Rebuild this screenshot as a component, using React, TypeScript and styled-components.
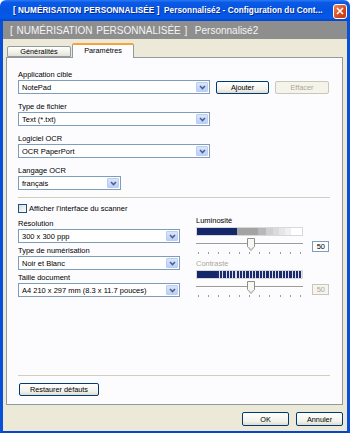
import React from "react";
import styled, { createGlobalStyle } from "styled-components";

const GlobalStyle = createGlobalStyle`
  html, body {
    margin: 0;
    padding: 0;
    background: #ffffff;
  }
  body {
    font-family: "Liberation Sans", Arial, sans-serif;
    font-size: 7.5px;
    color: #000000;
  }
`;

const Window = styled.div`
  width: 350px;
  height: 433px;
  display: flex;
  flex-direction: column;
  overflow: hidden;
`;

const TitleBar = styled.div`
  height: 21px;
  flex: none;
  display: flex;
  align-items: center;
  padding: 0 3px 0 13px;
  box-sizing: border-box;
  background: linear-gradient(
    #2a7af5 0%,
    #0a5ae6 12%,
    #0454e2 45%,
    #0558e8 85%,
    #0344c8 100%
  );
  border-radius: 6px 6px 0 0;
`;

const TitleText = styled.div`
  flex: 1;
  color: #ffffff;
  font-weight: bold;
  font-size: 8.2px;
  white-space: nowrap;
  text-shadow: 1px 1px 0 #0a2a8c;
  letter-spacing: 0.05px;
`;

const CloseButton = styled.div`
  width: 14px;
  height: 15px;
  box-sizing: border-box;
  border: 1px solid #ffffff;
  border-radius: 3px;
  background: linear-gradient(135deg, #f08a60, #d8461c 60%, #c23a12);
  display: flex;
  align-items: center;
  justify-content: center;
  margin-top: 1px;
`;

const Body = styled.div`
  flex: 1;
  display: flex;
  flex-direction: column;
  background: #ece9d8;
  border-left: 3px solid #0850d8;
  border-right: 3px solid #0850d8;
  border-bottom: 2px solid #0846c8;
`;

const Banner = styled.div`
  height: 18px;
  flex: none;
  background: #8e8e8e;
  color: #f4f4f4;
  font-size: 10px;
  display: flex;
  align-items: center;
  padding-left: 7px;
  white-space: nowrap;
  word-spacing: 1px;
`;

const TabStrip = styled.div`
  height: 14px;
  margin-top: 4px;
  flex: none;
  display: flex;
  align-items: flex-end;
  gap: 1px;
  padding-left: 4px;
`;

const Tab = styled.div<{ $active?: boolean }>`
  box-sizing: border-box;
  width: ${(p) => (p.$active ? 62 : 64)}px;
  height: ${(p) => (p.$active ? 15 : 11)}px;
  margin-bottom: ${(p) => (p.$active ? -1 : 0)}px;
  position: relative;
  z-index: ${(p) => (p.$active ? 1 : 0)};
  border: 1px solid #919b9c;
  border-bottom: ${(p) => (p.$active ? "none" : "1px solid #919b9c")};
  border-top: ${(p) => (p.$active ? "2px solid #f3a53a" : "1px solid #919b9c")};
  border-radius: 2px 2px 0 0;
  background: ${(p) =>
    p.$active ? "#fcfcfe" : "linear-gradient(#ffffff, #f0efe8 60%, #e4e2d8)"};
  display: flex;
  align-items: ${(p) => (p.$active ? "flex-start" : "center")};
  justify-content: center;
  padding-top: ${(p) => (p.$active ? 1 : 0)}px;
  font-size: 7.3px;
`;

const Panel = styled.div`
  flex: 1;
  margin: 0 4px 0 3px;
  box-sizing: border-box;
  background: #fcfcfe;
  border: 1px solid #919b9c;
  padding: 12px 12px 8px 11px;
  display: flex;
  flex-direction: column;
`;

const Fields = styled.div`
  display: flex;
  flex-direction: column;
  gap: 8px;
`;

const Field = styled.div`
  display: flex;
  flex-direction: column;
`;

const Label = styled.div<{ $disabled?: boolean }>`
  height: 10px;
  line-height: 10px;
  white-space: nowrap;
  color: ${(p) => (p.$disabled ? "#aca899" : "#000000")};
`;

const Combo = styled.div<{ $width: number }>`
  width: ${(p) => p.$width}px;
  height: 14px;
  box-sizing: border-box;
  border: 1px solid #7f9db9;
  background: #ffffff;
  display: flex;
  align-items: center;
  padding: 1px;
`;

const ComboText = styled.div`
  flex: 1;
  padding-left: 2px;
  white-space: nowrap;
  overflow: hidden;
`;

const ArrowBox = styled.div`
  width: 12px;
  height: 10px;
  box-sizing: border-box;
  border: 1px solid #b9cdf5;
  border-radius: 1px;
  background: linear-gradient(#d9e5fd, #bccff8);
  display: flex;
  align-items: center;
  justify-content: center;
`;

const AppRow = styled.div`
  display: flex;
  align-items: center;
  gap: 6px;
`;

const Button = styled.div<{ $width: number; $disabled?: boolean }>`
  width: ${(p) => p.$width}px;
  height: 13px;
  box-sizing: border-box;
  border: 1px solid ${(p) => (p.$disabled ? "#c9c7ba" : "#003c74")};
  border-radius: 2px;
  background: ${(p) =>
    p.$disabled ? "#f5f4ea" : "linear-gradient(#ffffff, #f2f1ea 70%, #dcdbd0)"};
  color: ${(p) => (p.$disabled ? "#aca899" : "#000000")};
  display: flex;
  align-items: center;
  justify-content: center;
  white-space: nowrap;
  font-size: 7.3px;
`;

const Separator = styled.div<{ $top: number }>`
  height: 1px;
  width: 312px;
  background: #d0d0bf;
  margin-top: ${(p) => p.$top}px;
`;

const BottomSeparator = styled(Separator)`
  margin-top: auto;
`;

const CheckRow = styled.div`
  display: flex;
  align-items: center;
  gap: 2px;
  margin-top: 5px;
  height: 10px;
`;

const CheckBox = styled.div`
  width: 9px;
  height: 9px;
  box-sizing: border-box;
  border: 1px solid #1c5180;
  background: linear-gradient(135deg, #dcdcd4, #ffffff);
`;

const Columns = styled.div`
  display: grid;
  grid-template-columns: 162px 135px;
  column-gap: 16px;
  margin-top: 3px;
`;

const LeftCol = styled.div`
  display: flex;
  flex-direction: column;
  gap: 3px;
  padding-top: 3px;
`;

const RightCol = styled.div`
  display: flex;
  flex-direction: column;
  width: 134px;
`;

const Bar = styled.div<{ $kind: "lum" | "con" }>`
  width: 107px;
  height: 9px;
  margin-top: 1px;
  box-sizing: border-box;
  border: 1px solid #d8d8d8;
  background: ${(p) =>
    p.$kind === "lum"
      ? "linear-gradient(90deg, #14276a 0 38%, #a3a3a3 38% 58%, #b8b8b8 58% 66%, #cfcfcf 66% 72%, #dadada 72% 78%, #e6e6e6 78% 84%, #f0f0f0 84% 90%, #ffffff 90% 100%)"
      : "linear-gradient(90deg, #14276a 0 19%, transparent 19%), repeating-linear-gradient(90deg, #1a2b70 0 2.2px, #dde0ec 2.2px 3.3px)"};
`;

const SliderRow = styled.div`
  display: flex;
  align-items: center;
  gap: 9px;
  height: 14px;
  margin-top: 2px;
`;

const Track = styled.div`
  position: relative;
  width: 107px;
  height: 14px;
`;

const Groove = styled.div`
  position: absolute;
  left: 0;
  right: 0;
  top: 5px;
  height: 2px;
  box-sizing: border-box;
  border-top: 1px solid #9d9c99;
  border-bottom: 1px solid #ffffff;
  background: #f0efe8;
`;

const Thumb = styled.svg`
  position: absolute;
  top: 0;
  width: 8px;
  height: 13px;
`;

const ValueBox = styled.div<{ $disabled?: boolean }>`
  width: 17px;
  height: 11px;
  box-sizing: border-box;
  border: 1px solid ${(p) => (p.$disabled ? "#c9c7ba" : "#7f9db9")};
  background: ${(p) => (p.$disabled ? "#f5f4ee" : "#ffffff")};
  color: ${(p) => (p.$disabled ? "#aca899" : "#000000")};
  display: flex;
  align-items: center;
  justify-content: flex-end;
  padding-right: 3px;
  margin-top: 3px;
`;

const Ticks = styled.div`
  width: 103px;
  margin-left: 2px;
  display: flex;
  justify-content: space-between;
  height: 2px;
`;

const Tick = styled.span`
  width: 1px;
  height: 2px;
  background: #9a9a96;
`;

const LabelGap = styled.div`
  height: 5px;
`;

const Footer = styled.div`
  height: 26px;
  flex: none;
  display: flex;
  justify-content: flex-end;
  align-items: flex-start;
  gap: 7px;
  padding: 7px 4px 0 0;
  box-sizing: border-box;
`;

const FooterButton = styled(Button)`
  height: 14px;
`;

const RestoreRow = styled.div`
  margin-top: 7px;
  padding-left: 1px;
`;

const Arrow = () => (
  <svg width="7" height="5" viewBox="0 0 7 5">
    <path d="M1 1 L3.5 3.5 L6 1" fill="none" stroke="#4d6185" strokeWidth="1.6" />
  </svg>
);

const Select: React.FC<{ value: string; width: number }> = ({ value, width }) => (
  <Combo $width={width}>
    <ComboText>{value}</ComboText>
    <ArrowBox>
      <Arrow />
    </ArrowBox>
  </Combo>
);

const Slider: React.FC<{ value: number; disabled?: boolean }> = ({ value, disabled }) => (
  <>
    <SliderRow>
      <Track>
        <Groove />
        <Thumb viewBox="0 0 8 13" style={{ left: `calc(${value}% - 3px)` }}>
          <path
            d="M0.5 0.5 H7.5 V8.5 L4 12.5 L0.5 8.5 Z"
            fill="#f7f7f4"
            stroke="#8f8f8a"
          />
          <path d="M1.5 9 L4 11.5 L6.5 9" fill="none" stroke="#c8c8c0" />
        </Thumb>
      </Track>
      <ValueBox $disabled={disabled}>{value}</ValueBox>
    </SliderRow>
    <Ticks>
      {Array.from({ length: 11 }).map((_, i) => (
        <Tick key={i} />
      ))}
    </Ticks>
  </>
);

export default function App() {
  return (
    <Window>
      <GlobalStyle />
      <TitleBar>
        <TitleText>
          [ NUMÉRISATION PERSONNALISÉE ]&nbsp; Personnalisé2 - Configuration du Cont...
        </TitleText>
        <CloseButton>
          <svg width="8" height="8" viewBox="0 0 8 8">
            <path d="M1 1 L7 7 M7 1 L1 7" stroke="#ffffff" strokeWidth="1.6" />
          </svg>
        </CloseButton>
      </TitleBar>
      <Body>
        <Banner>[ NUMÉRISATION PERSONNALISÉE ]&nbsp; Personnalisé2</Banner>
        <TabStrip>
          <Tab>Généralités</Tab>
          <Tab $active>Paramètres</Tab>
        </TabStrip>
        <Panel>
          <Fields>
            <Field>
              <Label>Application cible</Label>
              <AppRow>
                <Select value="NotePad" width={192} />
                <Button $width={53}>Ajouter</Button>
                <Button $width={54} $disabled>
                  Effacer
                </Button>
              </AppRow>
            </Field>
            <Field>
              <Label>Type de fichier</Label>
              <Select value="Text (*.txt)" width={192} />
            </Field>
            <Field>
              <Label>Logiciel OCR</Label>
              <Select value="OCR PaperPort" width={192} />
            </Field>
            <Field>
              <Label>Langage OCR</Label>
              <Select value="français" width={103} />
            </Field>
          </Fields>
          <Separator $top={7} />
          <CheckRow>
            <CheckBox />
            <span>Afficher l'interface du scanner</span>
          </CheckRow>
          <Columns>
            <LeftCol>
              <Field>
                <Label>Résolution</Label>
                <Select value="300 x 300 ppp" width={162} />
              </Field>
              <Field>
                <Label>Type de numérisation</Label>
                <Select value="Noir et Blanc" width={162} />
              </Field>
              <Field>
                <Label>Taille document</Label>
                <Select value="A4 210 x 297 mm (8.3 x 11.7 pouces)" width={162} />
              </Field>
            </LeftCol>
            <RightCol>
              <Label>Luminosité</Label>
              <Bar $kind="lum" />
              <Slider value={50} />
              <LabelGap />
              <Label $disabled>Contraste</Label>
              <Bar $kind="con" />
              <Slider value={50} disabled />
            </RightCol>
          </Columns>
          <BottomSeparator $top={0} />
          <RestoreRow>
            <Button $width={80}>Restaurer défauts</Button>
          </RestoreRow>
        </Panel>
        <Footer>
          <FooterButton $width={47}>OK</FooterButton>
          <FooterButton $width={47}>Annuler</FooterButton>
        </Footer>
      </Body>
    </Window>
  );
}
